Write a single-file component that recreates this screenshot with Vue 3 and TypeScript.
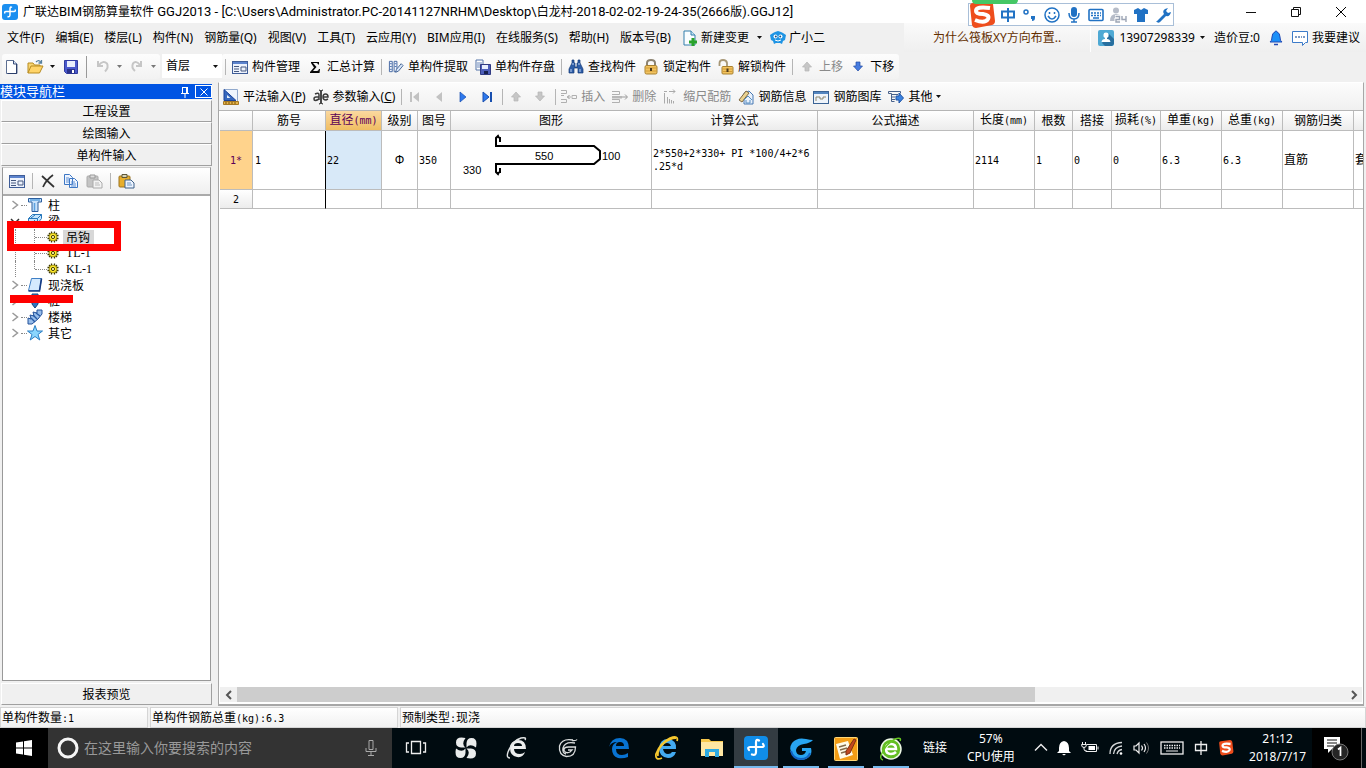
<script setup lang="ts">
import { h } from 'vue'

/* Icon artwork, each drawn on its own small canvas: [width, height, markup] */
const icons: Record<string, [number, number, string]> = {
  app: [16, 16, '<rect width="16" height="16" rx="3" fill="#1b8ff0"/><path d="M10 3.500Q8 2 8 5v5.500q0 3-2.500 2M3 9.500q-1-2 1-2h8q2 0 1-2" fill="none" stroke="#fff" stroke-width="1.500"/>'],
  newFile: [16, 16, '<path d="M2.500 1.500h7l3.500 3.500v9.500h-10.500z" fill="#fff" stroke="#5d6f92"/><path d="M9.500 1.500v3.500h3.500" fill="#d5e2f5" stroke="#384c78"/><path d="M12.500 5v9.500h-9" fill="none" stroke="#2c3f6b"/>'],
  open: [17, 16, '<path d="M1 14V4h5l1.500 2H13v2" fill="#f8d673" stroke="#b78b20"/><path d="M1 14l3-7h12l-3.500 7z" fill="#ffd469" stroke="#b78b20"/><path d="M9 3q3-3 5 .5M14.500 1v3h-3" fill="none" stroke="#5781a0" stroke-width="1.300"/>'],
  save: [16, 16, '<path d="M1.500 1.500h13v13h-11l-2-2z" fill="#4a59cc" stroke="#313ca0"/><path d="M4 2h8v6H4z" fill="#e9eefc"/><path d="M4 10h8v4.500H4z" fill="#28308a"/><path d="M9 11h2v3H9z" fill="#fff"/>'],
  undo: [16, 16, '<path d="M3 2v5h5M4 6q4-5 8-1.500 2 4-2 8" fill="none" stroke="#c6c6c6" stroke-width="2"/>'],
  redo: [16, 16, '<path d="M12 2v5H7M11 6Q7 1 4 4.500q-2 4 2 7.500" fill="none" stroke="#c6c6c6" stroke-width="2"/>'],
  caret: [5, 3, '<path d="M0 0h5L2.500 3z" fill="#111"/>'],
  caretGray: [5, 3, '<path d="M0 0h5L2.500 3z" fill="#777"/>'],
  form: [16, 16, '<rect x=".5" y="2.500" width="15" height="12" fill="#edf2fc" stroke="#3f5d98"/><path d="M1 3h14v2H1z" fill="#5c83cd"/><path d="M2 7.500h5M2 10h5M2 12.500h5M9 8h5v4H9z" fill="none" stroke="#46597f"/>'],
  sigma: [16, 16, '<path d="M4 3h8v2.500h-1Q11 4 9.500 4H6l3.500 4L6 12h4q1.500 0 2-2h1l-.5 4H3v-1l4-4.500L4 4z" fill="#080808"/>'],
  extract: [17, 16, '<path d="M1.500 2.500h3v11h-3zM6.500 2.500h3v11h-3z" fill="#f4f7ff" stroke="#4265a1"/><path d="M2 5h2M2 8h2M2 11h2M7 5h2M7 8h2" stroke="#4c72ae"/><path d="M9 11l5-6 2 2-5 6-3 1z" fill="#d9e7fa" stroke="#426292"/>'],
  store: [16, 16, '<path d="M1 1h7v10H1z" fill="#fff" stroke="#5474a9"/><path d="M2 4h5M2 6h5M2 8h5" stroke="#6b88bb"/><path d="M5.500 5.500h10v10h-10z" fill="#4d5eba" stroke="#313b83"/><path d="M7 6h6v4H7z" fill="#e8efff"/><path d="M9 12h4v3H9z" fill="#17204d"/>'],
  find: [16, 16, '<path d="M4 1h2v3h1v4h2V4h1V1h2v3l3 6v4h-5V9H6v5H1v-4l3-6z" fill="#2d5da8" stroke="#163b76" stroke-width=".7"/><path d="M3 10v3M12 10v3M5 4v2M11 4v2" stroke="#bfd4f1"/>'],
  lock: [16, 16, '<path d="M4 7V4q0-3 4-3t4 3v3" fill="none" stroke="#8c8371" stroke-width="2"/><rect x="2" y="6.500" width="12" height="8.500" rx="1.500" fill="#f2c360" stroke="#a9812f"/><path d="M3 9h10M3 12h10" stroke="#d29c36"/><path d="M8 9v3" stroke="#4e3b1c" stroke-width="2"/>'],
  unlock: [16, 16, '<path d="M1.500 7V4q0-3 3.500-3t4 3v3" fill="none" stroke="#a79776" stroke-width="1.800"/><rect x="4" y="7.500" width="11" height="7.500" rx="1" fill="#f2c360" stroke="#a9812f"/><path d="M5 10h9M5 12.500h9" stroke="#d29c36"/><path d="M9.500 9.500v3.500" stroke="#4e3b1c" stroke-width="2"/>'],
  upGray: [16, 16, '<path d="M8 3l4.500 5H10v4H6V8H3.500z" fill="#c6c6c6" stroke="#b4b4b4" stroke-width=".7"/>'],
  downGray: [16, 16, '<path d="M8 12L3.500 7H6V3h4v4h2.500z" fill="#c6c6c6" stroke="#b4b4b4" stroke-width=".7"/>'],
  down: [16, 16, '<path d="M8 12L3.500 7H6V3h4v4h2.500z" fill="#477ce0" stroke="#214ba4" stroke-width=".7"/>'],
  change: [16, 16, '<path d="M2 1h7l4 4v10H2z" fill="#fafdff" stroke="#337fac"/><path d="M9 1v4h4" fill="#c9e5f4" stroke="#337fac"/><path d="M11 8v8M7 12h8" stroke="#29a32b" stroke-width="3"/>'],
  robot: [16, 16, '<path d="M3 3l2-1 3-1 3 1 2 1 3 2-1 5-2 1-1 3-2-1H6l-2 1-1-3-2-1-1-5z" fill="#1e94e4"/><circle cx="5.500" cy="6.500" r="2" fill="#fff"/><circle cx="10.500" cy="6.500" r="2" fill="#fff"/><circle cx="5.800" cy="6.500" r="1" fill="#124f87"/><circle cx="10.200" cy="6.500" r="1" fill="#124f87"/><path d="M5 10q3 2 6 0" fill="none" stroke="#fff"/>'],
  avatar: [16, 16, '<rect width="16" height="16" rx="2" fill="#4fa9d4"/><path d="M11 4l5 5v5l-2 2H7l-3-3z" fill="#286f9f"/><path d="M5.500 4.500q0-2 2.500-2t2.500 2v2L9 8v1q3 0 3.500 3h-9Q4 9 7 9V8L5.500 6.500z" fill="#fff"/>'],
  bell: [14, 16, '<path d="M7 1q1 0 1 1 3 1 3 5 0 4 2 5H1q2-1 2-5 0-4 3-5 0-1 1-1z" fill="#1c90f8" stroke="#234ab4"/><path d="M5 14.500h4" stroke="#234ab4" stroke-width="1.500"/>'],
  chat: [16, 16, '<path d="M.5 1.500h15v11h-2l-3 3v-3H.5z" fill="#fff" stroke="#3c7bc9"/><path d="M3 7h2M6 7h2M9 7h1M11 7h2" stroke="#527bb4" stroke-width="1.500"/>'],
  triangle: [16, 16, '<path d="M1.500.5h13v14h-13z" fill="#eff5fd" stroke="#91a9cd"/><path d="M1 .500l12 11H1z" fill="#3768bd" stroke="#1a429a"/><path d="M4 6l3.500 3H4z" fill="#e7effa"/><path d="M.5 12.500h15v3H.5z" fill="#e6b54a" stroke="#a57723"/><path d="M3 13v2M6 13v2M9 13v2M12 13v2" stroke="#744e0b"/>'],
  param: [16, 16, '<path d="M2 5q4-2 4 1v5M6 8H3q-2 0-2 2 0 3 5 0M10 8h5q0-3-2.500-3T10 8q0 3 3 3l2-1" fill="none" stroke="#3c3c3c" stroke-width="1.500"/><path d="M6 1q2 0 2 2v10q0 2-2 2M10 1q-2 0-2 2v10q0 2 2 2" fill="none" stroke="#111"/>'],
  first: [16, 16, '<path d="M4 3v10" stroke="#c2c2c2" stroke-width="2"/><path d="M12 3v10L6 8z" fill="#c2c2c2"/>'],
  prev: [16, 16, '<path d="M11 3v10L5 8z" fill="#c2c2c2"/>'],
  next: [16, 16, '<path d="M5 3l6 5-6 5z" fill="#2e79ed" stroke="#184faf" stroke-width=".7"/>'],
  last: [16, 16, '<path d="M4 3l6 5-6 5z" fill="#2e79ed" stroke="#184faf"/><path d="M12 3v10" stroke="#184faf" stroke-width="2"/>'],
  insert: [16, 16, '<path d="M0 1.500h5.500v3H0M0 6.500h3M0 13.500h5.500v-3H0M11 6.500h4.500v3H11zM6 8h4" fill="none" stroke="#b0b0b0"/><path d="M8.500 6L6.500 8l2 2" fill="none" stroke="#999"/>'],
  remove: [16, 16, '<path d="M0 2.500h7.500v3H0M0 13.500h7.500v-3H0" fill="none" stroke="#b0b0b0"/><path d="M0 7h10v2.500H0z" fill="#b8b8b8"/><path d="M10 8h5M13 5.500L15.500 8 13 10.500" fill="none" stroke="#999"/>'],
  scale: [16, 16, '<path d="M1 2.500h3M6 2.500h6M10 .5l2 2-2 2M1.500 4v10.500M4.500 8v6.500M6.500 10v4.500M8.500 11v3.500M10.500 12v2.500" fill="none" stroke="#aaa"/>'],
  info: [16, 16, '<path d="M6 4l5-2 4 4v9H6z" fill="#e9f1fc" stroke="#4778b3"/><path d="M1 11l7-9 3 2-7 9z" fill="#ead391" stroke="#7f6842"/><path d="M6 11l4-4 4 4M8 11v3h4v-3" fill="none" stroke="#5a91c2"/>'],
  library: [16, 16, '<rect x=".5" y="2.500" width="15" height="12" fill="#eff4fa" stroke="#3a6395"/><path d="M1 4h14" stroke="#5486c0" stroke-width="2"/><path d="M3 12V8h4v2h3V8h3" fill="none" stroke="#8c8770"/>'],
  other: [16, 16, '<path d="M.5 2.500h12v2M.5 2.500v2h3v8h3M4 5.500h6M4 8h3M4 10.500h3" fill="none" stroke="#48618a"/><path d="M8 7h3V4l4.500 5-4.500 5v-3H8z" fill="#3b82df" stroke="#2055a7"/>'],
  cross: [16, 16, '<path d="M2 3l12 11M13 2Q6 7 3 14" fill="none" stroke="#333" stroke-width="1.700"/>'],
  copy: [16, 16, '<path d="M1.500 1.500h5l3 3v7h-8zM6.500 5.500h5l3 3v6h-8z" fill="#eff5ff" stroke="#3d77c4"/><path d="M3 5h3M3 7h3M3 9h3M8 9h4M8 11h5M8 13h5" stroke="#5c8fd3"/>'],
  pasteGray: [17, 16, '<rect x="1" y="3" width="11" height="11" rx="1" fill="#c4c4c4" stroke="#aaa"/><path d="M4 2h5v3H4z" fill="#ddd" stroke="#999"/><path d="M7 7h6l3 3v5H7z" fill="#f3f3f3" stroke="#aaa"/><path d="M9 10h4M9 12h5" stroke="#bbb"/>'],
  paste: [17, 16, '<rect x="1" y="3" width="11" height="11" rx="1" fill="#e7ae2c" stroke="#9b7321"/><path d="M4 1.500h5v3H4z" fill="#d9d4b4" stroke="#5d5637"/><path d="M7 7h6l3 3v5H7z" fill="#edf4ff" stroke="#3d6189"/><path d="M9 10h4M9 12h5" stroke="#6e95c0"/>'],
  column: [16, 16, '<path d="M1.500 1.500h13v3.500H11v9.500H5V5H1.500z" fill="#c8e2fb" stroke="#2b5e9e"/><path d="M3 3h10M7.500 6v8" stroke="#5ba1de" stroke-width="1.500"/>'],
  beam: [16, 16, '<path d="M1.500 5.500l4-4h9v4l-4 5v4h-9z" fill="#c6e6fd" stroke="#2777bb"/><path d="M1.500 5.500h9l4-4M10.500 5.500v8M3 12l5-5M4 5l4-3" fill="none" stroke="#2777bb"/>'],
  gear: [12, 12, '<path d="M4.500 .5v11M7.500 .5v11M.5 4.500h11M.5 7.500h11M2 2l8 8M10 2l-8 8" stroke="#3e3904" stroke-width="1.300"/><circle cx="6" cy="6" r="3.900" fill="#ffe92b" stroke="#8b8009" stroke-width=".8"/><circle cx="6" cy="6" r="1.600" fill="#fff9a8" stroke="#463f04"/>'],
  slab: [16, 16, '<path d="M4.500 1.500h10l-2 12h-11z" fill="#d4eafe" stroke="#3f7fc5"/><path d="M1.500 14h11l2-12.500" fill="none" stroke="#173c83" stroke-width="1.600"/>'],
  pile: [16, 16, '<path d="M5 1h6v10l-3 4-3-4z" fill="#2f75bf" stroke="#17457d"/>'],
  stair: [16, 16, '<path d="M1 12V9l3 1-1-4 4 1-1-4 4 1V1h5v4l-4 5-6 5H1z" fill="#97bdea" stroke="#24529a"/><path d="M4 9l4 4M6 6l4 4M9 4l4 3" stroke="#255aa6" stroke-width="1.400"/>'],
  star: [16, 16, '<path d="M8 .5l2 5.500h5.500L11 9.500l1.800 5.500L8 11.500 3.200 15 5 9.500.5 6H6z" fill="#8ad6fe" stroke="#2b7ec3"/>'],
  branch: [8, 10, '<path d="M1.500 1l5 4-5 4" fill="none" stroke="#999" stroke-width="1.500"/>'],
  branchOpen: [10, 8, '<path d="M1 2l4 4 4-4" fill="none" stroke="#333" stroke-width="1.500"/>'],
  pin: [10, 12, '<path d="M2 1.500h6M2.500 1.500v6M7.500 1.500v6M6.500 1.500v6M1 7.500h8M5 8v4" fill="none" stroke="#fff"/>'],
  close: [12, 12, '<path d="M1 1l10 10M11 1L1 11" stroke="currentColor" fill="none"/>'],
  closeSmall: [10, 10, '<path d="M1.500 1.500l7 7M8.500 1.500l-7 7" stroke="#fff" fill="none"/>'],
  minimize: [12, 12, '<path d="M1 6.500h10" stroke="#111"/>'],
  restore: [12, 12, '<path d="M1.500 3.500h7v7h-7zM3.500 3V1.500h7v7H9" fill="none" stroke="#111"/>'],
  sogou: [28, 28, '<path d="M2 5Q2 2 5 2L21 0q3 0 4 3l2 17q0 3-3 4L8 27q-3 0-4-3z" fill="#ee4d1c"/><path d="M22 7Q8 5 8 10q0 3 7 3 7 1 5 5-3 5-13 1" fill="none" stroke="#fff" stroke-width="4"/>'],
  zhong: [16, 16, '<path d="M2 4.500h12v6H2zM8 1v14" fill="none" stroke="#2172c4" stroke-width="2"/>'],
  punct: [16, 16, '<circle cx="4" cy="5" r="2" fill="none" stroke="#2172c4" stroke-width="1.500"/><path d="M9 9h4v2q0 3-3 3v-2H9z" fill="#2172c4"/>'],
  smile: [16, 16, '<circle cx="8" cy="8" r="7" fill="none" stroke="#2172c4" stroke-width="1.500"/><path d="M5.500 5v2M10.500 5v2M4 9q4 6 8 0" fill="none" stroke="#2172c4" stroke-width="1.500"/>'],
  mic: [16, 16, '<rect x="5" y="0" width="6" height="10" rx="3" fill="#2172c4"/><path d="M3 6q0 6 5 6t5-6M8 12v3M5 15h6" fill="none" stroke="#2172c4" stroke-width="1.500"/>'],
  keys: [16, 16, '<rect x="1" y="2.500" width="14" height="11" rx="1" fill="none" stroke="#2172c4" stroke-width="1.600"/><path d="M3 6h10M3 8.500h10" stroke="#2172c4" stroke-width="1.500" stroke-dasharray="2 1"/><path d="M5 11h6" stroke="#2172c4" stroke-width="1.500"/>'],
  user24: [17, 16, '<circle cx="6" cy="3.500" r="3" fill="#b6bcc8"/><path d="M0 14q0-7 6-7l4 1v6z" fill="#b6bcc8"/><path d="M5 9.500h5v3H6v2.500h5M12 9v4h4M16 9v6" fill="none" stroke="#fff" stroke-width="3"/><path d="M5.500 9.500h4v3H6v2.500h4M12 9v3.500h4M16 9v6" fill="none" stroke="#9ca5b5" stroke-width="1.400"/>'],
  shirt: [16, 16, '<path d="M1 3l4-2 3 2 3-2 4 2v4h-3v8H4V7H1z" fill="#2172c4"/>'],
  wrench: [16, 16, '<path d="M2 14l7-7q-2-3 1-5l3-1-2 3 2 2 3-1q-1 5-5 4l-6 6q-2 2-4-1z" fill="#2172c4"/>'],
  windows: [16, 16, '<path d="M0 2.500L7 1.500v6H0zM8 1.300L16 0v7.500H8zM0 8.500h7v6l-7-1zM8 8.500h8V16l-8-1.300z" fill="#fff"/>'],
  ring: [22, 22, '<circle cx="11" cy="11" r="9" fill="none" stroke="#f5f5f5" stroke-width="3"/>'],
  searchMic: [14, 18, '<path d="M5 1.500h4v9H5zM2 9v3.500h10V9M7 13v4M4 16.500h6" fill="none" stroke="#aaa"/>'],
  taskView: [22, 18, '<path d="M6.500 2.500h9v12h-9zM4 4H1.500v9H4M18 4h2.500v9H18" fill="none" stroke="#eee" stroke-width="1.300"/>'],
  clover: [22, 22, '<path d="M10.500 1Q1-1 1 5.500q0 4.500 5 5h4.500Q6 7 10.500 1zM21 10.500Q23 1 16.500 1q-4.500 0-5 5v4.500Q15 6 21 10.500zM11.500 21q9.500 2 9.500-4.500 0-4.500-5-5h-4.500Q16 15 11.500 21zM1 11.500Q-1 21 5.500 21q4.500 0 5-5v-4.500Q7 16 1 11.500z" fill="#eaecec"/>'],
  browserWhite: [22, 24, '<path d="M4 12q0-7 8-8 8 0 8 9H8q0 5 6 5 3 0 5-2-2 6-8 5-7-1-7-9M8 10h8q0-3-4-3t-4 3" fill="#eceeee" fill-rule="evenodd"/><path d="M4 22q-4 0-2-6Q6 5 15 2q6-1 4 2" fill="none" stroke="#e2e5e5" stroke-width="1.400"/>'],
  swirlWhite: [22, 22, '<path d="M20 2.500Q19 4 15 3.500M16 3Q5 1 2.500 9q-1 9 7 10.500 9 0 9-9.500h-7q-5 0-4.500 3.500 2 3.500 6 1.500l2-2h-4M18 6Q8 4 6 11q-1 5 3 6" fill="none" stroke="#dadddd" stroke-width="1.300"/>'],
  edge: [22, 22, '<path d="M1 10Q3 1 12 1q9 0 9 11H8q0 6 6 6 3 0 6-2v4q-5 2-10 1-6-2-6-9 0-5 5-7-6 0-8 5M8 9h8q0-4-4-4t-4 4" fill="#0873d2" fill-rule="evenodd"/>'],
  ie: [24, 24, '<path d="M21 13H8q1 5 5 5 3 0 4-2h4q-2 6-8 6-9-1-9-10 1-9 9-9 9 1 8 10M8 10h8q-1-3-4-3t-4 3" fill="#43aaf0" fill-rule="evenodd"/><path d="M7 22Q0 25 1 18 5 7 15 2q9-3 7 3M21 2Q15 2 9 7 2 13 3 20" fill="none" stroke="#f6c82f" stroke-width="1.800"/>'],
  folder: [22, 20, '<path d="M0 1h8l2 2h12v15H0z" fill="#f7c84c"/><path d="M0 4h22v14H0z" fill="#ffe7a3"/><path d="M4 19v-8h14v8h-4v-5H8v5z" fill="#2eaae2"/>'],
  glodon: [24, 24, '<rect width="24" height="24" rx="4" fill="#108de8"/><path d="M15 4.500q-3-2-3 2V16q0 4-4 2.500M5 14q-2-3 1-3h12q3 0 1-3" fill="none" stroke="#fff" stroke-width="2.200" stroke-linecap="round"/>'],
  swirl: [24, 24, '<path d="M24 3q-3 3-9 4-7 1-8 6 0 5 5 5 4 0 5-4h-4v-3h9q2 8-5 11-8 3-13-3Q-1 12 3 6 8 0 17 2q4 1 7 1" fill="#28a5f2"/><path d="M2 14q2 8 10 8 7 0 9-6" fill="none" stroke="#1263c3" stroke-width="2"/>'],
  note: [24, 24, '<rect x=".5" y=".5" width="23" height="23" rx="1" fill="#f39d16" stroke="#ffd777"/><path d="M2 7l12-3 5 14-13 4z" fill="#fffbe9"/><path d="M5 10l7-2M6 13l7-2M7 16l7-2" stroke="#846b49" stroke-width="1.500"/><path d="M12 14l8-12 2 1-6 13-4 2z" fill="#c2481f" stroke="#7c3012"/>'],
  browserGreen: [24, 24, '<circle cx="12" cy="12" r="10" fill="#63bd22" stroke="#edf8e6" stroke-width="1.500"/><path d="M7 12h10q0-5-5-5t-5 5q0 5 5 5 3 0 5-2" fill="none" stroke="#fff" stroke-width="2.500"/><path d="M4 23q-4-1-1-7Q7 7 16 2q7-2 5 2" fill="none" stroke="#67c622" stroke-width="1.500"/>'],
  chevron: [14, 10, '<path d="M1 7.500l6-6 6 6" fill="none" stroke="#eee" stroke-width="1.400"/>'],
  trayBell: [14, 16, '<path d="M7 1q5 1 5 7v3l2 2H0l2-2V8q0-6 5-7M5 14h4l-2 1.500z" fill="#fff"/>'],
  battery: [18, 14, '<path d="M6 3.500h9.500v7H5V9M17 5.500v3M1.500 1v2M4.500 1v2M.5 3.500h5q0 3-2.500 3t-2.500-3M3 6v2q0 2 2 2" fill="none" stroke="#eee"/><path d="M7.500 5H14v4H7.500z" fill="#fff"/>'],
  wifi: [14, 14, '<path d="M1 13Q1 2 13 1.500M4.500 13Q5 6 13 5M8 13q1-4 5-4.500" fill="none" stroke="#d5d8d9" stroke-width="1.300"/><circle cx="12" cy="12.500" r="1.300" fill="#fff"/>'],
  volume: [18, 14, '<path d="M1 5h2l3-3v10L3 9H1zM8.500 4.500q2 2.500 0 5M11 3q3 4 0 8" fill="none" stroke="#eee" stroke-width="1.200"/><path d="M13.500 1.500q4 5.500 0 11" fill="none" stroke="#777"/>'],
  trayKeys: [24, 14, '<rect x="1" y="1" width="22" height="12" fill="none" stroke="#eee" stroke-width="1.300"/><path d="M4 4.500h16M4 7h16" stroke="#eee" stroke-width="1.300" stroke-dasharray="1.500 1"/><path d="M6 10h12" stroke="#eee"/>'],
  trayZhong: [14, 14, '<path d="M1.500 3.500h11v6h-11zM7 0v14" fill="none" stroke="#eee" stroke-width="1.300"/>'],
  notice: [28, 26, '<path d="M1 2h16v12H9l-4 4v-4H1z" fill="#fff"/><path d="M4 5h10M4 8h10M4 11h7" stroke="#111"/><circle cx="17" cy="17" r="8" fill="#252525" stroke="#777"/><path d="M15 14.500l2.500-2V21" fill="none" stroke="#fff" stroke-width="1.700"/>'],
  scrollLeft: [8, 10, '<path d="M6 1L2 5l4 4" fill="none" stroke="#555" stroke-width="2"/>'],
  scrollRight: [8, 10, '<path d="M2 1l4 4-4 4" fill="none" stroke="#555" stroke-width="2"/>'],
}

interface IconProps { name: string; size?: number }
const Icon = (p: IconProps) => {
  const [w, ht, art] = icons[p.name]
  const k = p.size ? p.size / w : 1
  return h('svg', { class: 'icon', width: w * k, height: ht * k, viewBox: `0 0 ${w} ${ht}`, 'aria-hidden': 'true', innerHTML: art })
}
Icon.props = ['name', 'size']

/* Text set in runs, so Latin and Chinese characters can each have their own font */
const Runs = (p: { t: string; kind?: string }) =>
  h('span', { class: p.kind ?? 'cell-text' }, (p.t.match(/[\x20-\x7e]+|[^\x20-\x7e]+/g) ?? []).map(run =>
    h('span', { class: /^[\x20-\x7e]/.test(run) ? 'half' : 'full' }, run)))
Runs.props = ['t', 'kind']

const title = '广联达BIM钢筋算量软件 GGJ2013 - [C:\\Users\\Administrator.PC-20141127NRHM\\Desktop\\白龙村-2018-02-02-19-24-35(2666版).GGJ12]'
const menus = ['文件(F)', '编辑(E)', '楼层(L)', '构件(N)', '钢筋量(Q)', '视图(V)', '工具(T)', '云应用(Y)', 'BIM应用(I)', '在线服务(S)', '帮助(H)', '版本号(B)']

interface Tool { icon?: string; label?: string; key?: string; off?: boolean; sep?: boolean; caret?: boolean }
const mainTools: Tool[] = [
  { sep: true }, { icon: 'form', label: '构件管理' }, { icon: 'sigma', label: '汇总计算' },
  { sep: true }, { icon: 'extract', label: '单构件提取' }, { icon: 'store', label: '单构件存盘' },
  { sep: true }, { icon: 'find', label: '查找构件' }, { icon: 'lock', label: '锁定构件' }, { icon: 'unlock', label: '解锁构件' },
  { sep: true }, { icon: 'upGray', label: '上移', off: true }, { icon: 'down', label: '下移' },
]
const gridTools: Tool[] = [
  { icon: 'triangle', label: '平法输入', key: 'P' }, { icon: 'param', label: '参数输入', key: 'C' },
  { sep: true }, { icon: 'first' }, { icon: 'prev' }, { icon: 'next' }, { icon: 'last' },
  { sep: true }, { icon: 'upGray' }, { icon: 'downGray' },
  { sep: true }, { icon: 'insert', label: '插入', off: true }, { icon: 'remove', label: '删除', off: true },
  { icon: 'scale', label: '缩尺配筋', off: true }, { icon: 'info', label: '钢筋信息' }, { icon: 'library', label: '钢筋图库' },
  { icon: 'other', label: '其他', caret: true },
]

const sections = ['工程设置', '绘图输入', '单构件输入']
interface TreeNode { label: string; icon: string; child?: boolean; open?: boolean; selected?: boolean; last?: boolean }
const tree: TreeNode[] = [
  { label: '柱', icon: 'column' },
  { label: '梁', icon: 'beam', open: true },
  { label: '吊钩', icon: 'gear', child: true, selected: true },
  { label: 'TL-1', icon: 'gear', child: true },
  { label: 'KL-1', icon: 'gear', child: true, last: true },
  { label: '现浇板', icon: 'slab' },
  { label: '桩', icon: 'pile' },
  { label: '楼梯', icon: 'stair' },
  { label: '其它', icon: 'star' },
]

const columns = [
  { title: '筋号', width: 73, value: '1' },
  { title: '直径(mm)', width: 56, value: '22' },
  { title: '级别', width: 36, value: 'Φ' },
  { title: '图号', width: 33, value: '350' },
  { title: '图形', width: 201, value: '' },
  { title: '计算公式', width: 166, value: '2*550+2*330+ PI *100/4+2*6\n.25*d' },
  { title: '公式描述', width: 156, value: '' },
  { title: '长度(mm)', width: 61, value: '2114' },
  { title: '根数', width: 38, value: '1' },
  { title: '搭接', width: 39, value: '0' },
  { title: '损耗(%)', width: 49, value: '0' },
  { title: '单重(kg)', width: 61, value: '6.3' },
  { title: '总重(kg)', width: 61, value: '6.3' },
  { title: '钢筋归类', width: 71, value: '直筋' },
  { title: '', width: 40, value: '套' },
]

const imeIcons = ['zhong', 'punct', 'smile', 'mic', 'keys', 'user24', 'shirt', 'wrench']
const apps = [
  { icon: 'taskView', state: 'first' }, { icon: 'clover', state: 'wide' }, { icon: 'browserWhite', state: 'wide' },
  { icon: 'swirlWhite', state: 'wide' }, { icon: 'edge', state: 'wide' }, { icon: 'ie', state: '' },
  { icon: 'folder', state: '' }, { icon: 'glodon', state: 'active' }, { icon: 'swirl', state: 'running' },
  { icon: 'note', state: 'running' }, { icon: 'browserGreen', state: 'running' },
]
const trayIcons = ['chevron', 'trayBell', 'battery', 'wifi', 'volume', 'trayKeys', 'trayZhong']
</script>

<template>
  <div class="desktop">
    <header class="titlebar">
      <Icon name="app" />
      <h1><Runs :t="title" kind="title-text" /></h1>
      <div class="win-buttons">
        <button aria-label="最小化"><Icon name="minimize" /></button>
        <button aria-label="还原"><Icon name="restore" /></button>
        <button aria-label="关闭"><Icon name="close" /></button>
      </div>
    </header>
    <div class="ime">
      <Icon name="sogou" />
      <Icon v-for="n in imeIcons" :key="n" :name="n" />
    </div>

    <nav class="menubar">
      <button v-for="m in menus" :key="m">{{ m }}</button>
      <button class="with-icon"><Icon name="change" />新建变更<Icon name="caret" class="after" /></button>
      <button class="with-icon"><Icon name="robot" />广小二</button>
      <div class="account">
        <a href="#" class="question">为什么筏板XY方向布置..</a>
        <div class="user">
          <button class="phone"><Icon name="avatar" />13907298339<Icon name="caret" /></button>
          <span>造价豆:0</span>
          <Icon name="bell" />
          <button class="advice"><Icon name="chat" />我要建议</button>
        </div>
      </div>
    </nav>

    <div class="toolbar">
      <div class="strip files">
        <button aria-label="新建"><Icon name="newFile" /></button>
        <button aria-label="打开"><Icon name="open" /><Icon name="caret" /></button>
        <button aria-label="保存"><Icon name="save" /></button>
        <i class="sep tall"></i>
        <button aria-label="撤销"><Icon name="undo" /><Icon name="caretGray" /></button>
        <button aria-label="恢复"><Icon name="redo" /><Icon name="caretGray" /></button>
      </div>
      <div class="floor">
        <select aria-label="楼层"><option>首层</option></select>
        <Icon name="caret" />
      </div>
      <div class="strip">
        <template v-for="(t, i) in mainTools" :key="i">
          <i v-if="t.sep" class="sep"></i>
          <button v-else class="tool" :class="{ off: t.off }"><Icon :name="t.icon!" :size="16" />{{ t.label }}</button>
        </template>
      </div>
    </div>

    <main>
      <aside>
        <div class="nav-title">
          <span>模块导航栏</span>
          <button aria-label="固定"><Icon name="pin" /></button>
          <button aria-label="关闭" class="boxed"><Icon name="closeSmall" /></button>
        </div>
        <button v-for="s in sections" :key="s" class="section">{{ s }}</button>
        <div class="tree-panel">
          <div class="tree-tools">
            <button aria-label="管理"><Icon name="form" /></button><i class="sep"></i>
            <button aria-label="删除"><Icon name="cross" /></button>
            <button aria-label="复制"><Icon name="copy" /></button>
            <button aria-label="粘贴"><Icon name="pasteGray" /></button><i class="sep"></i>
            <button aria-label="粘贴到"><Icon name="paste" /></button>
          </div>
          <ul class="tree">
            <li v-for="n in tree" :key="n.label" :class="{ child: n.child, last: n.last, selected: n.selected }">
              <span v-if="!n.child" class="twist"><Icon :name="n.open ? 'branchOpen' : 'branch'" /></span>
              <i class="dots"></i>
              <Icon :name="n.icon" />
              <span class="node-label"><Runs v-if="!n.child || n.selected" :t="n.label" /><b v-else>{{ n.label }}</b></span>
            </li>
            <li class="mark-box" aria-hidden="true"></li>
            <li class="mark-line" aria-hidden="true"></li>
          </ul>
        </div>
        <button class="section report">报表预览</button>
      </aside>

      <section class="work">
        <div class="grid-tools">
          <template v-for="(t, i) in gridTools" :key="i">
            <i v-if="t.sep" class="sep"></i>
            <button v-else class="tool" :class="{ off: t.off, bare: !t.label }" :aria-label="t.label ?? t.icon">
              <Icon :name="t.icon!" />
              <span v-if="t.label">{{ t.label }}<template v-if="t.key">(<u>{{ t.key }}</u>)</template></span>
              <Icon v-if="t.caret" name="caret" />
            </button>
          </template>
        </div>
        <div class="table-wrap">
          <table>
            <colgroup><col class="row-col"><col v-for="(c, i) in columns" :key="i" :style="{ width: c.width + 'px' }"></colgroup>
            <thead>
              <tr><th></th><th v-for="(c, i) in columns" :key="i" :class="{ current: i === 1 }"><Runs :t="c.title" /></th></tr>
            </thead>
            <tbody>
              <tr class="bar-row">
                <th class="active-row"><Runs t="1*" /></th>
                <td v-for="(c, i) in columns" :key="i" :class="{ edit: i === 1, grade: i === 2, cursor: i === 0 }">
                  <svg v-if="i === 4" class="shape" viewBox="451 131 200 58" width="200" height="58">
                    <path d="M496 147v-9l2-2 1 2M500 137v5M496 146h98l6 5v8l-6 5h-98M496 163v9l2 2 1-2M500 168v5" />
                    <text x="535" y="160">550</text><text x="602" y="160">100</text><text x="463" y="174">330</text>
                  </svg>
                  <Runs v-else :t="c.value" />
                </td>
              </tr>
              <tr class="blank-row"><th><Runs t="2" /></th><td v-for="(c, i) in columns" :key="i" :class="{ cursor: i === 0 }"></td></tr>
            </tbody>
          </table>
        </div>
        <div class="hscroll">
          <button aria-label="向左"><Icon name="scrollLeft" /></button>
          <div class="track"><div class="thumb"></div></div>
          <button aria-label="向右"><Icon name="scrollRight" /></button>
        </div>
      </section>
    </main>

    <footer class="status">
      <span class="s1"><Runs t="单构件数量:1" /></span>
      <span class="s2"><Runs t="单构件钢筋总重(kg):6.3" /></span>
      <span class="s3"><Runs t="预制类型:现浇" /></span>
    </footer>

    <div class="taskbar">
      <button class="start" aria-label="开始"><Icon name="windows" /></button>
      <label class="search">
        <Icon name="ring" />
        <input type="text" aria-label="搜索" placeholder="在这里输入你要搜索的内容">
        <Icon name="searchMic" />
      </label>
      <button v-for="a in apps" :key="a.icon" class="app" :class="a.state" :aria-label="a.icon"><Icon :name="a.icon" /></button>
      <span class="links">链接</span>
      <div class="cpu"><span>57%</span><span>CPU使用</span></div>
      <div class="tray">
        <Icon v-for="n in trayIcons" :key="n" :name="n" />
        <Icon name="sogou" :size="16" />
      </div>
      <div class="clock"><span>21:12</span><span>2018/7/17</span></div>
      <button class="notice" aria-label="通知"><Icon name="notice" /></button>
    </div>
  </div>
</template>

<style>
html, body { margin: 0; overflow: hidden; }
.icon { display: block; flex: none; }
.cell-text { white-space: pre; }
.cell-text .half { font: 10px/12px "DejaVu Sans Mono", monospace; }
.cell-text .full { font: 12px/12px "Liberation Sans", "Noto Sans CJK SC", sans-serif; }
.title-text { white-space: pre; }
.title-text .half { font: 13px/16px Roboto, sans-serif; }
</style>

<style scoped>
.desktop {
  position: relative; display: flex; flex-direction: column; height: 100vh;
  overflow: hidden; background: #f0f0f0; color: #000;
  font: 12px/16px "Noto Sans", "Noto Sans CJK SC", sans-serif;
}
button { display: flex; align-items: center; margin: 0; padding: 0; border: 0; background: none; color: inherit; font: inherit; white-space: nowrap; }
.titlebar { display: flex; align-items: center; height: 23px; background: #fff; padding-left: 2px; flex: none; }
h1 { flex: 1; margin: 0 0 0 5px; font: inherit; white-space: nowrap; }
.win-buttons { display: flex; padding-right: 3px; }
.win-buttons button { width: 45px; height: 21px; justify-content: center; }
.ime {
  position: absolute; top: 3px; right: 192px; height: 23px; display: flex; align-items: center; gap: 6px;
  box-sizing: border-box; border: 1px solid #a9bfd8; background: #fff; padding: 0 2px 0 0; z-index: 2;
}
.ime .icon:first-child { margin-left: -1px; margin-right: -2px; }
.ime::before { content: ""; position: absolute; left: 3px; top: -4px; width: 46px; height: 4px; background: #45c765; border-radius: 0 0 12px 12px; }

.menubar { display: flex; align-items: center; height: 29px; padding-left: 7px; flex: none; }
.menubar > button { margin-right: 11px; }
.menubar .with-icon { gap: 3px; margin: 0; }
.with-icon .after { margin: 0 8px 0 5px; }
.account { margin-left: auto; display: flex; height: 29px; width: 462px; background: linear-gradient(#fafafa, #efefef); }
.question { width: 187px; box-sizing: border-box; padding-left: 29px; line-height: 29px; color: #632f00; text-decoration: none; border-right: 1px solid #fff; white-space: nowrap; }
.user { flex: 1; display: flex; align-items: center; justify-content: flex-end; padding: 0 6px; gap: 9px; white-space: nowrap; }
.phone { gap: 5px; }
.advice { gap: 4px; }

.toolbar { display: flex; height: 30px; padding: 2px 0 3px 2px; box-sizing: border-box; flex: none; }
.strip { display: flex; align-items: center; height: 25px; border-radius: 3px; background: linear-gradient(#fdfdfd, #f2f2f2); padding-right: 2px; }
.files { width: 158px; box-sizing: border-box; padding: 0 4px 0 2px; justify-content: space-between; }
.files button { gap: 6px; }
.floor { display: flex; align-items: center; width: 60px; height: 24px; margin-left: 2px; background: #fff; }
.floor .icon { margin-right: 4px; }
select { flex: 1; min-width: 0; appearance: none; border: 0; background: none; padding: 0 0 0 4px; font: inherit; }
.sep { width: 1px; height: 16px; background: #b5b5b5; margin: 0 2px 0 3px; flex: none; }
.sep.tall { height: 22px; margin: 0; background: #999; }
.tool { gap: 4px; padding: 0 3px 0 4px; }
.tool.off { color: #8a8a8a; }
.tool.bare { padding: 0 4px; }

main { flex: 1; display: flex; min-height: 0; }
aside { width: 212px; display: flex; flex-direction: column; flex: none; padding: 2px 0; }
.nav-title { display: flex; align-items: center; height: 15px; margin-bottom: 1px; background: #0054e3; color: #fff; font-size: 13px; line-height: 15px; }
.nav-title span { flex: 1; }
.nav-title button { width: 18px; height: 13px; justify-content: center; }
.nav-title .boxed { box-sizing: border-box; border: 1px solid #fff; width: 17px; margin-left: 1px; }
.section { height: 22px; justify-content: center; box-sizing: border-box; border: 1px solid #fff; border-right-color: #a0a0a0; border-bottom-color: #a0a0a0; margin-left: 1px; padding-top: 2px; flex: none; background: #f0f0f0; }
.tree-panel { flex: 1; min-height: 0; display: flex; flex-direction: column; margin: 1px 1px 2px 2px; border: 1px solid #999; border-top-color: #ccc; }
.tree-tools { display: flex; align-items: center; height: 26px; padding-left: 6px; gap: 7px; background: linear-gradient(#fff, #efefef); border-bottom: 2px solid #aaa; }
.tree-tools .sep { margin: 0; }
.tree { position: relative; flex: 1; margin: 0; padding: 1px 0; list-style: none; background: #fff; }
.tree li { display: flex; align-items: center; height: 16px; }
.twist { width: 12px; margin-left: 6px; display: flex; justify-content: center; }
.dots { width: 6px; border-top: 1px dotted #888; }
.tree li > .icon { margin-right: 3px; }
.tree .child { padding-left: 32px; position: relative; }
.tree .child > .icon { margin-right: 4px; }
.child::before { content: ""; position: absolute; left: 12px; top: 0; height: 16px; border-left: 1px dotted #888; }
.child::after { content: ""; position: absolute; left: 31px; top: 0; height: 16px; border-left: 1px dotted #888; }
.child.last::after { height: 8px; }
.child .dots { width: 12px; }
.node-label { padding-left: 2px; line-height: 15px; }
.child .node-label { padding: 0 4px 0 3px; }
.node-label b { font: 12px/15px "Liberation Serif", serif; }
.selected .node-label { background: #d8d8d8; }
.tree .mark-box { position: absolute; left: 4px; top: 25px; width: 114px; height: 30px; box-sizing: border-box; border: 7px solid #f00; }
.tree .mark-line { position: absolute; left: 7px; top: 99px; width: 63px; height: 8px; background: #f00; }

.work { flex: 1; min-width: 0; margin-left: 6px; display: flex; flex-direction: column; border: 1px solid #a7a7a7; border-top: 1px solid #fff; border-bottom-width: 2px; margin-right: 2px; margin-bottom: 1px; background: #fff; }
.grid-tools { display: flex; align-items: center; height: 27px; border-bottom: 1px solid #b5b5b5; background: linear-gradient(#fcfcfc, #f0f0f0); flex: none; }
.grid-tools .sep { margin: 0 1px 0 3px; }
.table-wrap { flex: 1; min-height: 0; overflow: hidden; padding-left: 1px; }
table { table-layout: fixed; width: 0; border-collapse: separate; border-spacing: 0; }
.row-col { width: 33px; }
th, td { box-sizing: border-box; padding: 0 1px; border: 0 solid #bcbcbc; border-width: 0 1px 1px 0; font-weight: normal; font-size: 12px; line-height: 12px; overflow: hidden; white-space: nowrap; }
td { text-align: left; vertical-align: middle; }
th { padding: 0; background: linear-gradient(#fff, #ececec); }
thead th { height: 20px; }
th.current { background: linear-gradient(#fbd9a0, #f0bd62); color: #5b0057; }
th.active-row { background: #ffd38c; color: #5b0057; }
.bar-row td { height: 59px; }
.blank-row td { height: 19px; }
td.edit { background: #d8e9f8; }
td.grade { text-align: center; }
td.cursor { border-right-color: #000; padding-left: 2px; }
.shape { display: block; margin-left: -1px; fill: none; stroke: #000; stroke-width: 2; }
.shape text { fill: #000; stroke: none; font: 11px "Liberation Sans", sans-serif; }
.hscroll { display: flex; height: 15px; background: #f0f0f0; margin: 0 1px 2px; flex: none; }
.hscroll button { width: 17px; justify-content: center; }
.track { flex: 1; }
.thumb { width: 72%; height: 15px; background: #cdcdcd; }

.status { display: flex; height: 21px; gap: 2px; flex: none; }
.status span { white-space: nowrap; }
.s1, .s2, .s3 { box-sizing: border-box; border: 1px solid #d5d5d5; padding: 1px 1px; line-height: 17px; background: linear-gradient(#fff, #f1f1f1); }
.s1 { width: 148px; }
.s2 { width: 248px; }
.s3 { flex: 1; }

.taskbar { display: flex; height: 40px; background: #000b10; color: #fff; flex: none; }
.start { width: 48px; justify-content: center; background: #000; }
.search { width: 344px; display: flex; align-items: center; box-sizing: border-box; padding: 0 14px 0 9px; background: #333; }
.search input { flex: 1; min-width: 0; border: 0; background: none; padding: 0 0 0 5px; font: 14px/20px "Noto Sans", "Noto Sans CJK SC", sans-serif; color: #fff; outline: 0; }
.search input::placeholder { color: #999; opacity: 1; }
.app { width: 45px; justify-content: center; box-sizing: border-box; }
.app.first { width: 48px; }
.app.wide { width: 51px; }
.app.active { background: #333c42; border-bottom: 2px solid #76b9ed; width: 44px; padding-top: 2px; }
.app.running { padding-top: 2px; background: linear-gradient(#76b9ed, #76b9ed) center bottom / 36px 2px no-repeat; }
.links { line-height: 40px; margin-left: 10px; }
.cpu, .clock { display: flex; flex-direction: column; align-items: center; justify-content: center; line-height: 18px; white-space: nowrap; }
.cpu { margin-left: 20px; }
.tray { flex: 1; display: flex; align-items: center; justify-content: space-between; padding: 0 15px 0 19px; }
.clock { padding-right: 6px; }
.notice { width: 50px; margin-right: 4px; justify-content: center; border-right: 1px solid #666; background: #000; }
</style>
